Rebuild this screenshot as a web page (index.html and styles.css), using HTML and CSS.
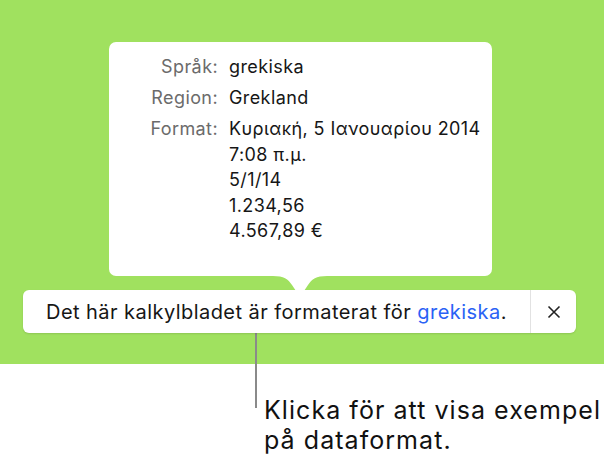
FILE: index.html
```html
<!DOCTYPE html>
<html lang="sv">
<head>
<meta charset="utf-8">
<link rel="stylesheet" href="styles.css">
</head>
<body>
<div class="page">
  <div class="stage">
    <div class="popover">
      <div class="grid">
        <div class="label">Språk:</div>
        <div class="value">grekiska</div>
        <div class="label">Region:</div>
        <div class="value">Grekland</div>
        <div class="label">Format:</div>
        <div class="value multi">
          <div>Κυριακή, 5 Ιανουαρίου 2014</div>
          <div>7:08 π.μ.</div>
          <div>5/1/14</div>
          <div>1.234,56</div>
          <div>4.567,89 €</div>
        </div>
      </div>
      <svg class="arrow" width="54" height="22" viewBox="0 0 54 22">
        <path d="M0 0 C11 0 15 3 19 9 L27 21 L35 9 C39 3 43 0 54 0 Z" fill="#fff"/>
      </svg>
    </div>
    <div class="bar">
      <div class="message"><span>Det här kalkylbladet är formaterat för <span class="link">grekiska</span>.</span></div>
      <div class="close">
        <svg width="14" height="14" viewBox="0 0 14 14"><path d="M1.5 1.5 L12.5 12.5 M12.5 1.5 L1.5 12.5" stroke="#222" stroke-width="1.6" fill="none"/></svg>
      </div>
    </div>
  </div>
  <div class="callout">
    <div class="line"></div>
    <div class="note">Klicka för att visa exempel<br>på dataformat.</div>
  </div>
</div>
</body>
</html>
```
FILE: styles.css
```css
html, body {
  margin: 0;
  padding: 0;
  background: #ffffff;
}
body {
  width: 604px;
  height: 463px;
  overflow: hidden;
  font-family: Inter, "Liberation Sans", Arial, sans-serif;
}
.page {
  display: flex;
  flex-direction: column;
}
.stage {
  background: #a0e15f;
  height: 364px;
  box-sizing: border-box;
  padding-top: 42px;
  display: flex;
  flex-direction: column;
  align-items: flex-start;
}
.popover {
  position: relative;
  margin-left: 109px;
  width: 383px;
  height: 234px;
  background: #ffffff;
  border-radius: 7px;
  box-sizing: border-box;
  padding-top: 12px;
}
.grid {
  display: grid;
  grid-template-columns: 109px 1fr;
  column-gap: 11px;
  row-gap: 6px;
  font-size: 18px;
  letter-spacing: 0.4px;
  line-height: 25px;
}
.label {
  text-align: right;
  color: #6b6b6b;
}
.value {
  color: #161616;
}
.multi div {
  line-height: 25.5px;
}
.arrow {
  position: absolute;
  left: 164px;
  top: 234px;
}
.bar {
  position: relative;
  margin-top: 14px;
  margin-left: 23px;
  width: 553px;
  height: 43px;
  background: #ffffff;
  border-radius: 6px;
  box-shadow: 0 1px 2px rgba(0,0,0,0.12);
  display: flex;
  align-items: stretch;
}
.message {
  flex: 1;
  display: flex;
  align-items: center;
  padding-left: 23px;
  font-size: 20px;
  letter-spacing: 0.45px;
  color: #161616;
}
.link {
  color: #2a62f5;
}
.close {
  width: 45px;
  border-left: 1px solid #e2e2e2;
  display: flex;
  align-items: center;
  justify-content: center;
}
.callout {
  display: flex;
  margin-top: -31px;
  padding-left: 255px;
  gap: 7px;
}
.line {
  width: 2px;
  height: 75px;
  background: #8a8a8a;
}
.note {
  margin-top: 62px;
  font-size: 25px;
  letter-spacing: 1.05px;
  line-height: 30px;
  color: #111111;
  white-space: nowrap;
}
```
